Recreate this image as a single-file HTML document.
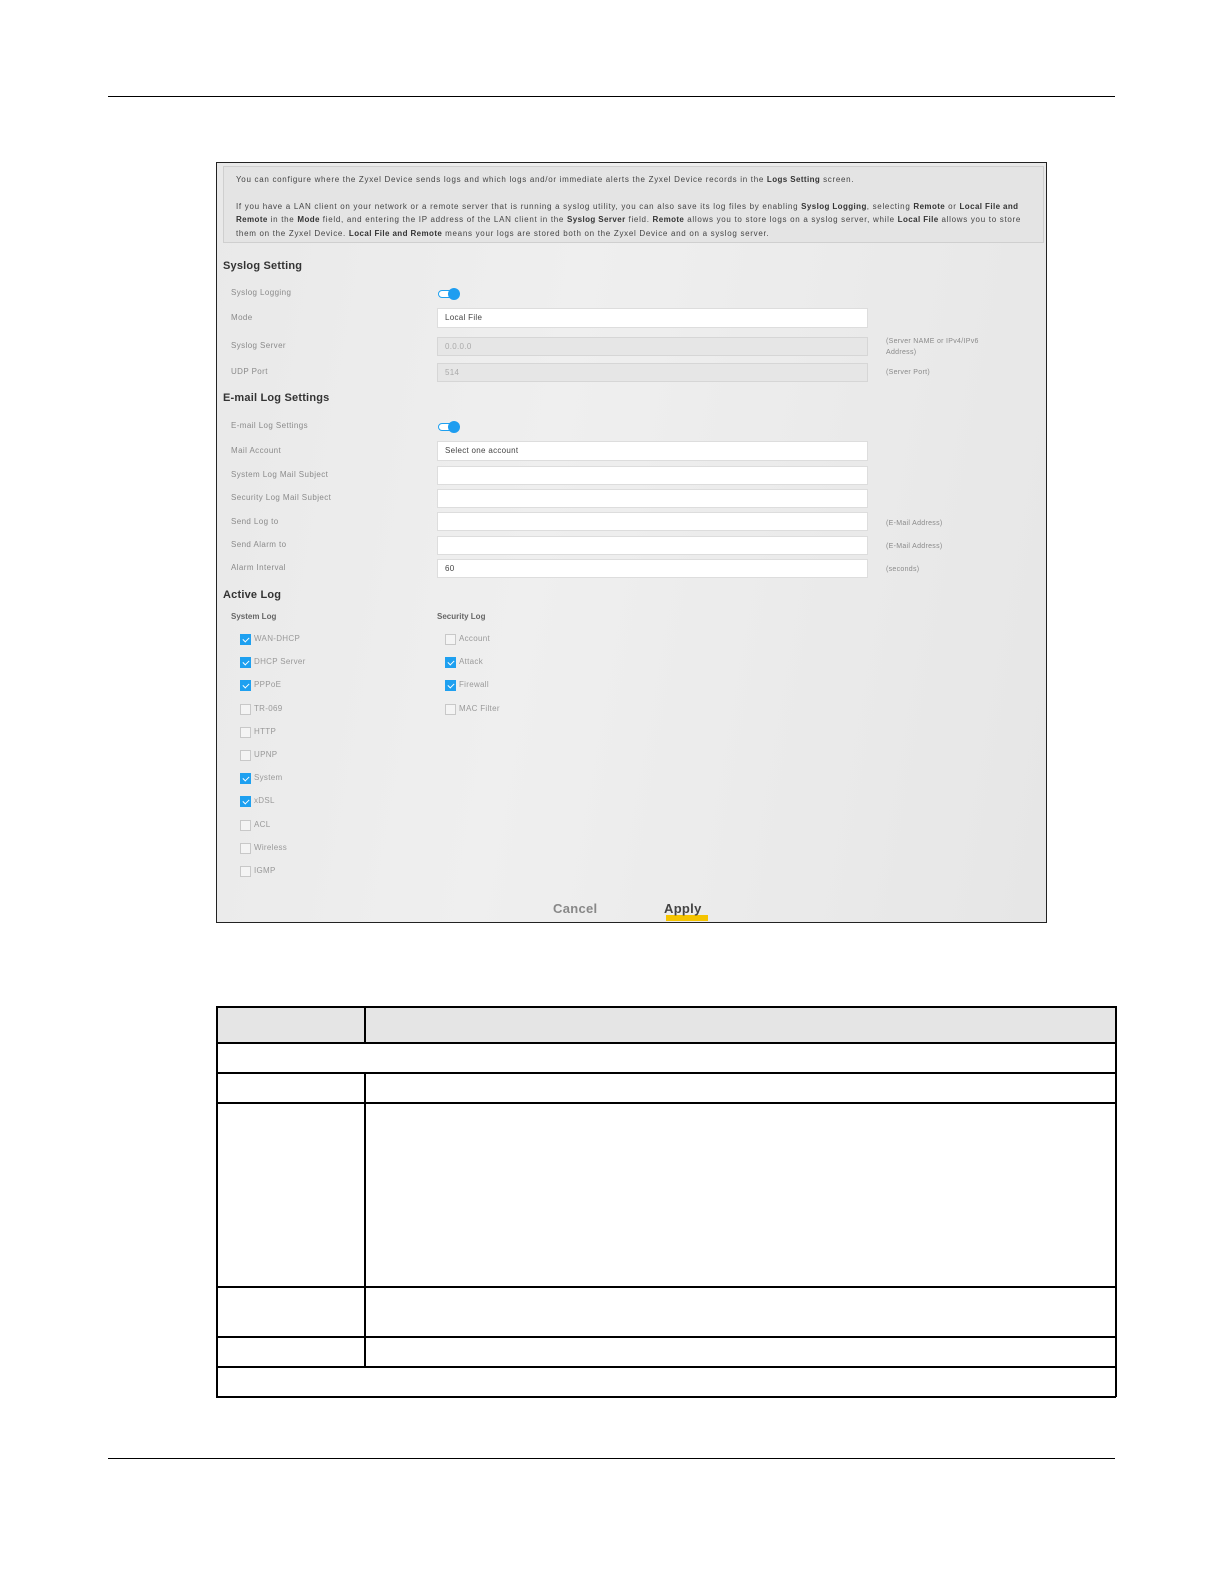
<!DOCTYPE html>
<html><head><meta charset="utf-8"><style>
*{margin:0;padding:0;box-sizing:border-box}
html,body{width:1224px;height:1584px;background:#fff;overflow:hidden;font-family:"Liberation Sans","DejaVu Sans",sans-serif}
.a{position:absolute}
.hl{position:absolute;height:1px;background:#000}
.vl{position:absolute;width:1px;background:#000}
#shot{position:absolute;left:216px;top:162px;width:831px;height:761px;border:1px solid #222;background:linear-gradient(100deg,#e9e9e9 0%,#efefef 40%,#e6e6e6 100%);overflow:hidden}
.info{position:absolute;left:6px;top:3px;width:821px;height:77px;border:1px solid #cfcfcf;background:#e4e4e4;font-size:8px;letter-spacing:0.7px;color:#444;padding:6px 12px;line-height:13.6px;white-space:nowrap}
.info b{color:#333;letter-spacing:0.4px}
.h{position:absolute;left:6px;font-size:11px;font-weight:bold;color:#333;letter-spacing:0.2px}
.l{position:absolute;left:14px;font-size:8px;color:#8a8a8a;letter-spacing:0.4px}
.in{position:absolute;left:220px;width:431px;height:20px;background:#fff;border:1px solid #ddd;font-size:8px;color:#444;padding:4px 7px;letter-spacing:0.3px}
.dis{background:#e6e6e6;color:#aaa;border-color:#d6d6d6}
.n{position:absolute;left:669px;font-size:7px;color:#8a8a8a;line-height:11px;letter-spacing:0.3px}
.tg{position:absolute;left:221px;width:22px;height:11px}
.tg .t{position:absolute;left:0;top:2px;width:20px;height:8px;border:1.5px solid #1ea0f0;border-radius:5px;background:#fff}
.tg .k{position:absolute;left:10px;top:0;width:12px;height:12px;border-radius:50%;background:#1e9df0}
.cb{position:absolute;width:11px;height:11px;border:1px solid #c8c8c8;background:#f4f4f4}
.cb.on{background:#1ea0f0;border-color:#1ea0f0}
.cb.on:after{content:"";position:absolute;left:3px;top:1px;width:3px;height:5px;border:solid #fff;border-width:0 1.5px 1.5px 0;transform:rotate(45deg)}
.cl{position:absolute;font-size:8px;color:#999;letter-spacing:0.3px}
.btn{position:absolute;top:738px;font-size:13px;font-weight:bold;letter-spacing:0.3px}
</style></head><body>
<div class="hl" style="left:108px;top:96px;width:1007px"></div>
<div id="shot">
<div class="info">You can configure where the Zyxel Device sends logs and which logs and/or immediate alerts the Zyxel Device records in the <b>Logs Setting</b> screen.<div style="height:13px"></div>If you have a LAN client on your network or a remote server that is running a syslog utility, you can also save its log files by enabling <b>Syslog Logging</b>, selecting <b>Remote</b> or <b>Local File and</b><br><b>Remote</b> in the <b>Mode</b> field, and entering the IP address of the LAN client in the <b>Syslog Server</b> field. <b>Remote</b> allows you to store logs on a syslog server, while <b>Local File</b> allows you to store<br>them on the Zyxel Device. <b>Local File and Remote</b> means your logs are stored both on the Zyxel Device and on a syslog server.</div>
<div class="h" style="top:97px">Syslog Setting</div>
<div class="l" style="top:125px">Syslog Logging</div>
<div class="tg" style="top:125px"><div class="t"></div><div class="k"></div></div>
<div class="l" style="top:150px">Mode</div>
<div class="in" style="top:145px">Local File</div>
<div class="l" style="top:178px">Syslog Server</div>
<div class="in dis" style="top:174px;height:19px">0.0.0.0</div>
<div class="n" style="top:173px">(Server NAME or IPv4/IPv6<br>Address)</div>
<div class="l" style="top:204px">UDP Port</div>
<div class="in dis" style="top:200px;height:19px">514</div>
<div class="n" style="top:204px">(Server Port)</div>
<div class="h" style="top:229px">E-mail Log Settings</div>
<div class="l" style="top:258px">E-mail Log Settings</div>
<div class="tg" style="top:258px"><div class="t"></div><div class="k"></div></div>
<div class="l" style="top:283px">Mail Account</div>
<div class="in" style="top:278px">Select one account</div>
<div class="l" style="top:307px">System Log Mail Subject</div>
<div class="in" style="top:303px;height:19px"></div>
<div class="l" style="top:330px">Security Log Mail Subject</div>
<div class="in" style="top:326px;height:19px"></div>
<div class="l" style="top:354px">Send Log to</div>
<div class="in" style="top:349px;height:19px"></div>
<div class="n" style="top:355px">(E-Mail Address)</div>
<div class="l" style="top:377px">Send Alarm to</div>
<div class="in" style="top:373px;height:19px"></div>
<div class="n" style="top:378px">(E-Mail Address)</div>
<div class="l" style="top:400px">Alarm Interval</div>
<div class="in" style="top:396px;height:19px">60</div>
<div class="n" style="top:401px">(seconds)</div>
<div class="h" style="top:426px">Active Log</div>
<div class="a" style="left:14px;top:449px;font-size:8px;font-weight:bold;color:#666">System Log</div>
<div class="a" style="left:220px;top:449px;font-size:8px;font-weight:bold;color:#666">Security Log</div>
<div class="cb on" style="left:23px;top:471px"></div><div class="cl" style="left:37px;top:471px">WAN-DHCP</div>
<div class="cb on" style="left:23px;top:494px"></div><div class="cl" style="left:37px;top:494px">DHCP Server</div>
<div class="cb on" style="left:23px;top:517px"></div><div class="cl" style="left:37px;top:517px">PPPoE</div>
<div class="cb" style="left:23px;top:541px"></div><div class="cl" style="left:37px;top:541px">TR-069</div>
<div class="cb" style="left:23px;top:564px"></div><div class="cl" style="left:37px;top:564px">HTTP</div>
<div class="cb" style="left:23px;top:587px"></div><div class="cl" style="left:37px;top:587px">UPNP</div>
<div class="cb on" style="left:23px;top:610px"></div><div class="cl" style="left:37px;top:610px">System</div>
<div class="cb on" style="left:23px;top:633px"></div><div class="cl" style="left:37px;top:633px">xDSL</div>
<div class="cb" style="left:23px;top:657px"></div><div class="cl" style="left:37px;top:657px">ACL</div>
<div class="cb" style="left:23px;top:680px"></div><div class="cl" style="left:37px;top:680px">Wireless</div>
<div class="cb" style="left:23px;top:703px"></div><div class="cl" style="left:37px;top:703px">IGMP</div>
<div class="cb" style="left:228px;top:471px"></div><div class="cl" style="left:242px;top:471px">Account</div>
<div class="cb on" style="left:228px;top:494px"></div><div class="cl" style="left:242px;top:494px">Attack</div>
<div class="cb on" style="left:228px;top:517px"></div><div class="cl" style="left:242px;top:517px">Firewall</div>
<div class="cb" style="left:228px;top:541px"></div><div class="cl" style="left:242px;top:541px">MAC Filter</div>
<div class="a" style="left:449px;top:752px;width:42px;height:6px;background:#f5c400"></div>
<div class="btn" style="left:336px;color:#888">Cancel</div>
<div class="btn" style="left:447px;color:#444">Apply</div>
</div>
<div class="a" style="left:216px;top:1006px;width:899px;height:36px;background:#e5e5e5"></div>
<div class="hl" style="left:216px;top:1006px;width:900px;height:1.5px"></div>
<div class="hl" style="left:216px;top:1042px;width:900px;height:1.5px"></div>
<div class="hl" style="left:216px;top:1072px;width:900px;height:1.5px"></div>
<div class="hl" style="left:216px;top:1102px;width:900px;height:1.5px"></div>
<div class="hl" style="left:216px;top:1286px;width:900px;height:1.5px"></div>
<div class="hl" style="left:216px;top:1336px;width:900px;height:1.5px"></div>
<div class="hl" style="left:216px;top:1366px;width:900px;height:1.5px"></div>
<div class="hl" style="left:216px;top:1396px;width:900px;height:1.5px"></div>
<div class="vl" style="left:216px;top:1006px;height:391px;width:1.5px"></div>
<div class="vl" style="left:1115px;top:1006px;height:391px;width:1.5px"></div>
<div class="vl" style="left:364px;top:1006px;height:37px;width:1.5px"></div>
<div class="vl" style="left:364px;top:1072px;height:295px;width:1.5px"></div>
<div class="hl" style="left:108px;top:1458px;width:1007px"></div>
</body></html>
